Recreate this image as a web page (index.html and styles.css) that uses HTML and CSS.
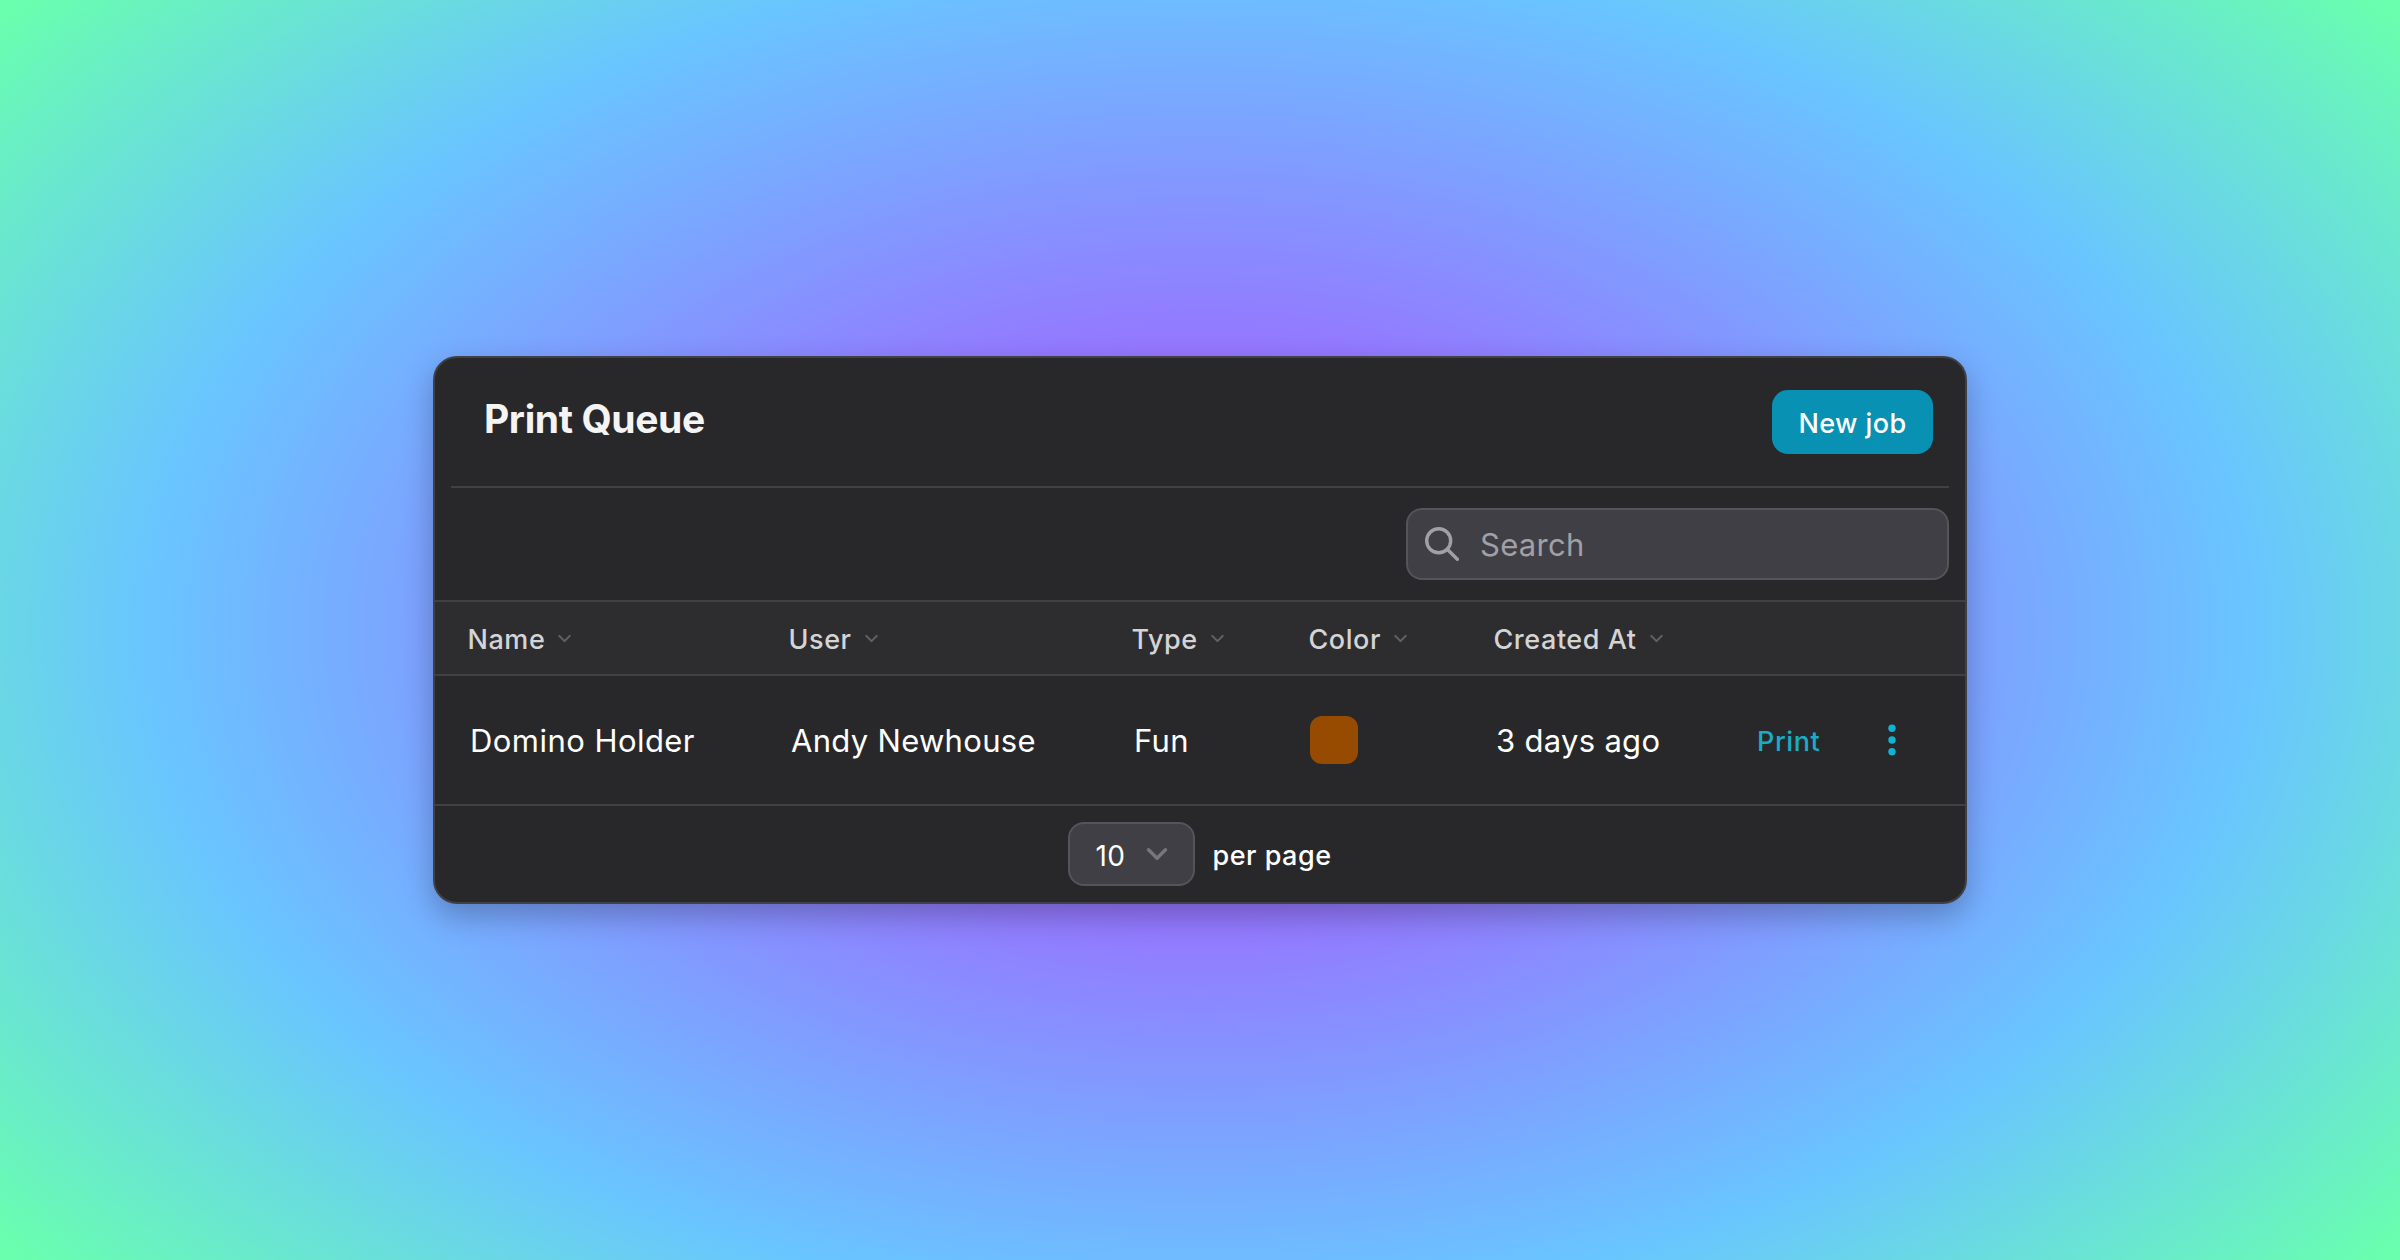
FILE: index.html
```html
<!DOCTYPE html>
<html lang="en">
<head>
<meta charset="utf-8">
<title>Print Queue</title>
<link rel="stylesheet" href="styles.css">
</head>
<body>
<svg class="defs" aria-hidden="true"><symbol id="chevron" viewBox="0 0 20 20"><path d="M5 7.5l5 5 5-5" fill="none" stroke="currentColor" stroke-width="2" stroke-linecap="round" stroke-linejoin="round"/></symbol></svg>
<main class="card">
  <header class="card-header">
    <h1 class="title">Print Queue</h1>
    <button class="new-job" type="button">New job</button>
  </header>
  <div class="toolbar">
    <label class="search">
      <svg class="search-icon" viewBox="0 0 34 34"><circle cx="13.7" cy="13.7" r="12"/><path d="M22.3 22.3l10 10"/></svg>
      <span class="search-text">Search</span>
    </label>
  </div>
  <div class="row head">
    <div class="cell"><span class="label">Name</span><svg class="sort"><use href="#chevron"/></svg></div>
    <div class="cell"><span class="label">User</span><svg class="sort"><use href="#chevron"/></svg></div>
    <div class="cell"><span class="label">Type</span><svg class="sort"><use href="#chevron"/></svg></div>
    <div class="cell"><span class="label">Color</span><svg class="sort"><use href="#chevron"/></svg></div>
    <div class="cell"><span class="label">Created At</span><svg class="sort"><use href="#chevron"/></svg></div>
  </div>
  <div class="row body">
    <div class="cell"><span class="name">Domino Holder</span></div>
    <div class="cell"><span>Andy Newhouse</span></div>
    <div class="cell"><span>Fun</span></div>
    <div class="cell"><span class="swatch"></span></div>
    <div class="cell"><span>3 days ago</span></div>
    <div class="cell">
      <a class="print">Print</a>
      <svg class="dots" viewBox="0 0 8 32"><circle cx="4" cy="4.3" r="3.7"/><circle cx="4" cy="16" r="3.7"/><circle cx="4" cy="27.7" r="3.7"/></svg>
    </div>
  </div>
  <footer class="pagination">
    <div class="select"><span class="count">10</span><svg class="select-icon"><use href="#chevron"/></svg></div>
    <span class="per-page">per page</span>
  </footer>
</main>
</body>
</html>
```
FILE: styles.css
```css
* { box-sizing: border-box; }
body {
  margin: 0;
  width: 2400px;
  height: 1260px;
  overflow: hidden;
  display: flex;
  align-items: center;
  justify-content: center;
  font-family: Inter, "Liberation Sans", sans-serif;
  color: #fff;
  background: radial-gradient(1549px 996px at center, #b43fff 0%, #69c5ff 68%, #69ffae 99%);
}
.defs { position: absolute; width: 0; height: 0; }
.card {
  width: 1534px;
  height: 548px;
  background: #28282a;
  border: 2px solid #404047;
  border-radius: 24px;
  box-shadow: 0 12px 30px rgba(0, 0, 0, .25);
  overflow: hidden;
}
.card-header {
  height: 130px;
  margin: 0 16px;
  padding: 32px 16px 0 33px;
  border-bottom: 2px solid #414144;
  display: flex;
  align-items: flex-start;
  justify-content: space-between;
}
.title {
  margin: 4px 0 0;
  font-size: 39px;
  line-height: 50px;
  font-weight: 700;
  letter-spacing: -.4px;
  color: #f4f4f5;
}
.new-job {
  width: 161px;
  height: 64px;
  border: 0;
  padding: 4px 0 0;
  border-radius: 16px;
  background: #0891b2;
  color: #fff;
  font: 500 27px/40px Inter, sans-serif;
  letter-spacing: .4px;
}
.toolbar {
  height: 112px;
  padding: 20px 16px 0 0;
  display: flex;
  justify-content: flex-end;
}
.search {
  width: 543px;
  height: 72px;
  border: 2px solid #54545b;
  border-radius: 16px;
  background: #403f46;
  display: flex;
  align-items: center;
  padding-left: 17px;
  color: #a0a0a6;
}
.search-icon {
  width: 34px;
  height: 34px;
  margin-right: 21px;
  fill: none;
  stroke: currentColor;
  stroke-width: 3.4;
  stroke-linecap: round;
}
.search-text { padding-top: 2px; font-size: 31px; line-height: 48px; letter-spacing: .3px; }
.row {
  display: grid;
  grid-template-columns: 321px 343px 177px 185px 260px 1fr;
  padding-left: 32.5px;
  border-top: 2px solid #414144;
}
.cell { display: flex; align-items: center; }
.head {
  height: 74px;
  background: #2d2d2f;
  font-size: 27px;
  font-weight: 500;
  letter-spacing: .55px;
  color: #d4d4d6;
}
.label { padding-top: 3px; }
.sort { width: 21px; height: 21px; margin-left: 9px; color: #626266; }
.body {
  height: 130px;
  padding-left: 35px;
  font-size: 31px;
  letter-spacing: .3px;
}
.body span { padding-top: 1px; }
.name { letter-spacing: .45px; }
.body .swatch { width: 48px; height: 48px; margin-left: -1px; border-radius: 12px; background: #964b00; }
.print { padding: 2px 0 0 1px; font-size: 27px; font-weight: 500; letter-spacing: .6px; color: #1aacc6; }
.dots { width: 8px; height: 32px; margin-left: 68px; fill: #10b4d2; }
.pagination {
  height: 98px;
  padding-top: 16px;
  border-top: 2px solid #414144;
  display: flex;
  justify-content: center;
  align-items: flex-start;
  gap: 17px;
  font-size: 27px;
  line-height: 64px;
  letter-spacing: .5px;
}
.select {
  width: 127px;
  height: 64px;
  border: 2px solid #54545b;
  border-radius: 16px;
  background: #403f46;
  display: flex;
  align-items: center;
  padding-left: 25px;
}
.count { padding-top: 3px; font-size: 28px; }
.select-icon { width: 34px; height: 34px; margin-left: 14px; color: #76767c; }
.per-page { padding-top: 2px; font-weight: 500; }
```
